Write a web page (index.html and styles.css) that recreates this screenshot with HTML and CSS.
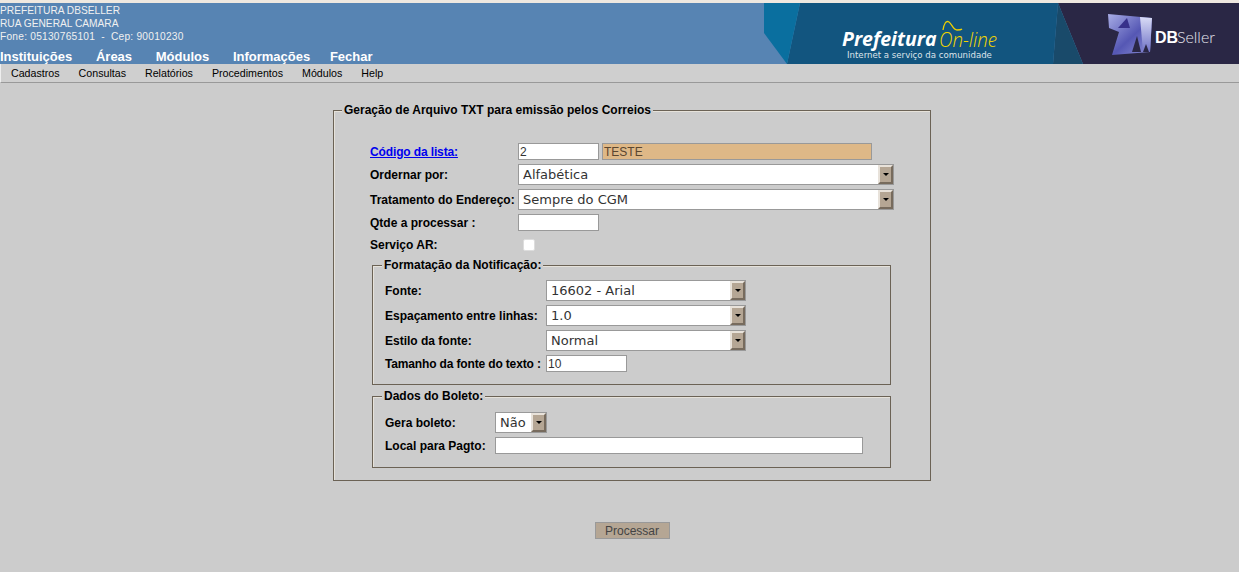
FILE: index.html
```html
<!DOCTYPE html>
<html lang="en">

<head>
	<meta charset="UTF-8">
	<meta name="viewport" content="width=device-width, initial-scale=1.0">
	<title>Geração de Arquivo TXT</title>
	<link rel="stylesheet" href="styles.css">
</head>

<body>
	<header class="top">
		<div class="top-info">
			<div class="address">
				<div>PREFEITURA DBSELLER</div>
				<div>RUA GENERAL CAMARA</div>
				<div class="phone">Fone: 05130765101 &nbsp;-&nbsp; Cep: 90010230</div>
			</div>
			<nav class="main-nav">
				<a href="#">Instituições</a>
				<a href="#">Áreas</a>
				<a href="#">Módulos</a>
				<a href="#">Informações</a>
				<a class="last" href="#">Fechar</a>
			</nav>
		</div>
		<svg class="banner" width="475" height="61" viewBox="0 0 475 61">
			<defs>
				<linearGradient id="cube" x1="0" y1="0" x2="1" y2="1">
					<stop offset="0" stop-color="#a9aee6" />
					<stop offset="0.55" stop-color="#5557b4" />
					<stop offset="1" stop-color="#8f92d8" />
				</linearGradient>
				<linearGradient id="cube-edge" x1="0" y1="0" x2="0" y2="1">
					<stop offset="0" stop-color="#d9dcf6" />
					<stop offset="1" stop-color="#6f72c6" />
				</linearGradient>
			</defs>
			<polygon points="294,0 475,0 475,61 319,61" fill="#2a2745" />
			<polygon points="294,0 319,61 289,61" fill="#194a6a" />
			<polygon points="36,0 294,0 289,61 23,61" fill="#12557f" />
			<polygon points="0,0 36,0 23,61 0,30" fill="#0a6f9f" />
			<text class="logo-main" x="78" y="43">Prefeitura</text>
			<text class="logo-line" x="175" y="44" textLength="58" lengthAdjust="spacingAndGlyphs">On-line</text>
			<path d="M179 27 C180 21 182 17 185 19 C188 21 189 27 193 27 C195 27 197 27 198 26" fill="none" stroke="#f0d000" stroke-width="1.3" />
			<text class="logo-sub" x="83" y="55">Internet a serviço da comunidade</text>
			<polygon points="344,11 388,15 386,49 348,52 355,29 345,25" fill="url(#cube)" />
			<polygon points="376,14 388,15 386,49 379,49" fill="url(#cube-edge)" />
			<polygon points="363,15 354,25 366,25" fill="#37318a" />
			<polygon points="368,49 373,33 377,49" fill="#2a2745" />
			<polygon points="379,49 382,41 385,49" fill="#2a2745" />
			<text class="logo-db" x="391" y="40">DB</text>
			<text class="logo-seller" x="413" y="40">Seller</text>
		</svg>
	</header>

	<nav class="sub-nav">
		<a href="#">Cadastros</a>
		<a href="#">Consultas</a>
		<a href="#">Relatórios</a>
		<a href="#">Procedimentos</a>
		<a href="#">Módulos</a>
		<a href="#">Help</a>
	</nav>

	<form class="page-form">
		<fieldset class="box box-main">
			<legend>Geração de Arquivo TXT para emissão pelos Correios</legend>

			<div class="rows rows-main">
				<a class="field-label link" href="#">Código da lista:</a>
				<div class="pair">
					<input class="text-input small" type="text" value="2">
					<input class="text-input readonly" type="text" value="TESTE" readonly>
				</div>

				<label class="field-label">Ordernar por:</label>
				<div class="combo wide">
					<select><option>Alfabética</option></select>
					<span class="combo-arrow"></span>
				</div>

				<label class="field-label">Tratamento do Endereço:</label>
				<div class="combo wide">
					<select><option>Sempre do CGM</option></select>
					<span class="combo-arrow"></span>
				</div>

				<label class="field-label">Qtde a processar :</label>
				<input class="text-input small" type="text">

				<label class="field-label">Serviço AR:</label>
				<div class="check-cell"><input class="check" type="checkbox"></div>
			</div>

			<fieldset class="box box-inner box-format">
				<legend>Formatação da Notificação:</legend>
				<div class="rows rows-format">
					<label class="field-label">Fonte:</label>
					<div class="combo medium">
						<select><option>16602 - Arial</option></select>
						<span class="combo-arrow"></span>
					</div>

					<label class="field-label">Espaçamento entre linhas:</label>
					<div class="combo medium">
						<select><option>1.0</option></select>
						<span class="combo-arrow"></span>
					</div>

					<label class="field-label">Estilo da fonte:</label>
					<div class="combo medium">
						<select><option>Normal</option></select>
						<span class="combo-arrow"></span>
					</div>

					<label class="field-label tight">Tamanho da fonte do texto :</label>
					<input class="text-input small" type="text" value="10">
				</div>
			</fieldset>

			<fieldset class="box box-inner box-boleto">
				<legend>Dados do Boleto:</legend>
				<div class="rows rows-boleto">
					<label class="field-label">Gera boleto:</label>
					<div class="combo tiny">
						<select><option>Não</option></select>
						<span class="combo-arrow"></span>
					</div>

					<label class="field-label">Local para Pagto:</label>
					<input class="text-input long" type="text">
				</div>
			</fieldset>
		</fieldset>

		<div class="actions">
			<button class="btn" type="button">Processar</button>
		</div>
	</form>
</body>

</html>
```

FILE: styles.css
```css
* {
	margin: 0;
	padding: 0;
	box-sizing: border-box;
	font-family: "Liberation Sans", Arial, sans-serif;
}

body {
	background-color: #ccc;
	color: #000;
	overflow: hidden;
}

.top {
	display: flex;
	justify-content: space-between;
	height: 64px;
	border-top: 3px solid #eee8e0;
	background-color: #5784b3;
}

.top-info {
	color: #f0f0f0;
	font-size: 10.2px;
}

.address {
	line-height: 13px;
	padding-top: 1px;
}

.phone {
	letter-spacing: 0.23px;
}

.main-nav {
	display: flex;
	gap: 23.7px;
	margin-top: 6px;
}

.main-nav a {
	color: #fff;
	font-size: 13px;
	font-weight: bold;
	line-height: 15px;
	text-decoration: none;
}

.main-nav .last {
	margin-left: -4px;
}

.banner {
	display: block;
	flex-shrink: 0;
}

.logo-main {
	font-family: "Open Sans", sans-serif;
	font-size: 19.5px;
	font-weight: bold;
	font-style: italic;
	fill: #fff;
}

.logo-line {
	font-family: "Open Sans", sans-serif;
	font-size: 21px;
	font-style: italic;
	font-weight: 300;
	fill: #f2d500;
}

.logo-sub {
	font-family: "DejaVu Sans", sans-serif;
	font-size: 8.6px;
	fill: #dde4ea;
}

.logo-db {
	font-family: "Liberation Sans", sans-serif;
	font-size: 16px;
	font-weight: bold;
	fill: #fff;
}

.logo-seller {
	font-family: "Lato", sans-serif;
	font-size: 16px;
	font-weight: 300;
	fill: #e8e8f0;
}

.sub-nav {
	display: flex;
	gap: 19px;
	height: 19px;
	padding-left: 10px;
	border-left: 1px solid #eee;
	border-bottom: 1px solid #999;
	background-color: #cfcfcf;
}

.sub-nav a {
	color: #000;
	font-size: 10.67px;
	line-height: 18px;
	text-decoration: none;
}

.page-form {
	width: 598px;
	margin-left: 333px;
}

.box {
	border: 1px solid #6b6255;
	box-shadow: inset 1px 1px 0 #e6e2da;
	min-width: 0;
}

.box legend {
	margin-left: 8px;
	padding: 0 2px;
	background-color: #ccc;
	font-size: 12px;
	font-weight: bold;
	line-height: 14px;
}

.box-main {
	margin-top: 20px;
	height: 378px;
}

.box-inner {
	width: 519px;
	margin-left: 38px;
}

.box-inner legend {
	margin-left: 9px;
}

.box-format {
	height: 127px;
	margin-top: 3px;
}

.box-boleto {
	height: 79px;
	margin-top: 4px;
}

.rows {
	display: grid;
	row-gap: 4px;
	align-items: center;
}

.rows-main {
	grid-template-columns: 148px 1fr;
	margin: 26px 0 0 36px;
}

.rows-format {
	grid-template-columns: 161px 1fr;
	margin: 8px 0 0 12px;
}

.rows-boleto {
	grid-template-columns: 110px 1fr;
	margin: 9px 0 0 12px;
}

.field-label {
	font-size: 12px;
	font-weight: bold;
}

.tight {
	letter-spacing: -0.15px;
}

.link {
	color: #00e;
	letter-spacing: -0.13px;
}

.pair {
	display: flex;
	gap: 3px;
}

.text-input {
	display: block;
	height: 17px;
	border: 1px solid #999;
	background-color: #fff;
	color: #333;
	font-size: 12px;
	padding: 0 1px;
	outline: none;
}

.small {
	width: 81px;
}

.readonly {
	width: 270px;
	background-color: #deb887;
	color: #5a4630;
}

.long {
	width: 368px;
}

.combo {
	display: flex;
	height: 21px;
	border: 1px solid #999;
	background-color: #fff;
}

.wide {
	width: 376px;
}

.medium {
	width: 200px;
}

.tiny {
	width: 52px;
}

.combo select {
	flex: 1;
	min-width: 0;
	appearance: none;
	border: none;
	outline: none;
	background: #fff;
	color: #333;
	font-family: "DejaVu Sans", sans-serif;
	font-size: 13px;
	padding-left: 4px;
}

.combo-arrow {
	display: flex;
	align-items: center;
	justify-content: center;
	width: 15px;
	border: 2px solid;
	border-color: #e8e2da #776b5d #776b5d #e8e2da;
	background-color: #b5a694;
}

.combo-arrow::before {
	content: "";
	border-left: 3px solid transparent;
	border-right: 3px solid transparent;
	border-top: 3px solid #000;
}

.check-cell {
	height: 20px;
	display: flex;
	align-items: center;
	padding-left: 5px;
}

.check {
	width: 12px;
	height: 12px;
	appearance: none;
	border: 1px solid #ddd;
	border-radius: 2px;
	background-color: #fff;
}

.actions {
	display: flex;
	justify-content: center;
	margin-top: 41px;
}

.btn {
	width: 75px;
	height: 17px;
	border: 1px solid #999;
	background-color: #b5a694;
	color: #444;
	font-size: 12px;
}
```
